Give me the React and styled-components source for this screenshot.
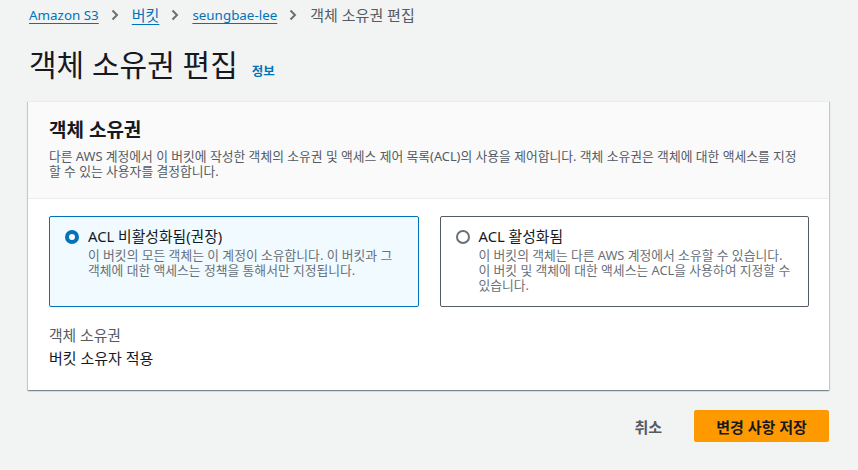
import styled, { createGlobalStyle } from 'styled-components';

const GlobalStyle = createGlobalStyle`
  html, body {
    margin: 0;
    padding: 0;
    background: #f2f3f3;
  }
  body {
    font-family: "Noto Sans", "Noto Sans CJK KR", sans-serif;
    color: #16191f;
  }
`;

const Page = styled.div`
  padding: 0 29px 0 28px;
`;

const Breadcrumbs = styled.nav`
  display: flex;
  align-items: center;
  height: 28px;
  padding-top: 1px;
  padding-left: 1px;
  font-size: 14px;
  line-height: 20px;
`;

const Crumb = styled.a`
  color: #0073bb;
  text-decoration: underline;
  text-underline-offset: 3px;
  text-decoration-thickness: 1px;
  font-size: ${(p) => (p.$ko ? '15px' : '13.4px')};
`;

const Current = styled.span`
  color: #545b64;
  font-size: 15px;
`;

const Sep = styled.svg`
  width: 8px;
  height: 12px;
  margin: 0 13px 0 12px;
  flex-shrink: 0;
`;

const Chevron = () => (
  <Sep viewBox="0 0 8 12">
    <path d="M1.5 1.5 L6 6 L1.5 10.5" fill="none" stroke="#687078" strokeWidth="2" />
  </Sep>
);

const TitleRow = styled.div`
  display: flex;
  align-items: baseline;
  padding: 18px 0 0 1px;
  height: 54px;
  box-sizing: border-box;
`;

const Title = styled.h1`
  margin: 0;
  font-size: 30px;
  line-height: 36px;
  font-weight: 400;
  color: #16191f;
`;

const InfoLink = styled.a`
  margin-left: 14px;
  font-size: 12.5px;
  font-weight: 700;
  color: #0073bb;
`;

const Card = styled.section`
  margin-top: 18px;
  background: #fff;
  border-top: 1px solid #eaeded;
  box-shadow: 0 1px 1px 0 rgba(0, 28, 36, 0.3), 1px 1px 1px 0 rgba(0, 28, 36, 0.15),
    -1px 1px 1px 0 rgba(0, 28, 36, 0.15);
`;

const CardHeader = styled.header`
  background: #fafafa;
  border-bottom: 1px solid #eaeded;
  padding: 16px 20px 19px 21px;
`;

const CardTitle = styled.h2`
  margin: 0 0 7px;
  font-size: 19px;
  line-height: 24px;
  font-weight: 700;
`;

const Description = styled.p`
  margin: 0;
  font-size: 12.8px;
  line-height: 15px;
  color: #545b64;
`;

const CardBody = styled.div`
  padding: 17px 20px 22px 21px;
`;

const Tiles = styled.div`
  display: grid;
  grid-template-columns: 1fr 1fr;
  gap: 21px;
`;

const Tile = styled.label`
  display: flex;
  align-items: flex-start;
  gap: 9px;
  padding: 11px 14px 13px 15px;
  border: 1px solid ${(p) => (p.$selected ? '#0073bb' : '#545b64')};
  border-radius: 2px;
  background: ${(p) => (p.$selected ? '#f1faff' : '#fff')};
`;

const Radio = styled.span`
  flex-shrink: 0;
  width: 14px;
  height: 14px;
  margin-top: 2px;
  box-sizing: border-box;
  border-radius: 50%;
  background: #fff;
  border: ${(p) => (p.$checked ? '4px solid #0073bb' : '2px solid #687078')};
`;

const TileText = styled.div`
  display: flex;
  flex-direction: column;
`;

const TileLabel = styled.span`
  font-size: 14.8px;
  line-height: 17px;
  color: #16191f;
`;

const TileDesc = styled.span`
  margin-top: 3px;
  font-size: 12.8px;
  line-height: 15px;
  color: #687078;
`;

const Field = styled.div`
  margin-top: 18px;
`;

const FieldLabel = styled.div`
  font-size: 14.8px;
  line-height: 20px;
  color: #545b64;
`;

const FieldValue = styled.div`
  margin-top: 3px;
  font-size: 15px;
  line-height: 20px;
  color: #16191f;
`;

const Actions = styled.div`
  display: flex;
  justify-content: flex-end;
  align-items: center;
  gap: 11px;
  margin-top: 20px;
`;

const Button = styled.button`
  height: 32px;
  padding: 0 20px;
  font-family: inherit;
  font-size: 15px;
  font-weight: 700;
  border-radius: 2px;
  border: 1px solid ${(p) => (p.$primary ? '#ff9900' : 'transparent')};
  background: ${(p) => (p.$primary ? '#ff9900' : 'transparent')};
  color: ${(p) => (p.$primary ? '#16191f' : '#545b64')};
  min-width: ${(p) => (p.$primary ? '135px' : 'auto')};
`;

const options = [
  {
    id: 'disabled',
    label: 'ACL 비활성화됨(권장)',
    desc: ['이 버킷의 모든 객체는 이 계정이 소유합니다. 이 버킷과 그', '객체에 대한 액세스는 정책을 통해서만 지정됩니다.'],
  },
  {
    id: 'enabled',
    label: 'ACL 활성화됨',
    desc: [
      '이 버킷의 객체는 다른 AWS 계정에서 소유할 수 있습니다.',
      '이 버킷 및 객체에 대한 액세스는 ACL을 사용하여 지정할 수',
      '있습니다.',
    ],
  },
];

export default function App() {
  const selected = 'disabled';

  return (
    <Page>
      <GlobalStyle />
      <Breadcrumbs>
        <Crumb>Amazon S3</Crumb>
        <Chevron />
        <Crumb $ko>버킷</Crumb>
        <Chevron />
        <Crumb>seungbae-lee</Crumb>
        <Chevron />
        <Current>객체 소유권 편집</Current>
      </Breadcrumbs>

      <TitleRow>
        <Title>객체 소유권 편집</Title>
        <InfoLink>정보</InfoLink>
      </TitleRow>

      <Card>
        <CardHeader>
          <CardTitle>객체 소유권</CardTitle>
          <Description>
            다른 AWS 계정에서 이 버킷에 작성한 객체의 소유권 및 액세스 제어 목록(ACL)의 사용을 제어합니다. 객체 소유권은 객체에 대한 액세스를 지정
            <br />
            할 수 있는 사용자를 결정합니다.
          </Description>
        </CardHeader>
        <CardBody>
          <Tiles>
            {options.map((o) => (
              <Tile key={o.id} $selected={o.id === selected}>
                <Radio $checked={o.id === selected} />
                <TileText>
                  <TileLabel>{o.label}</TileLabel>
                  <TileDesc>
                    {o.desc.map((line, i) => (
                      <span key={i}>
                        {line}
                        <br />
                      </span>
                    ))}
                  </TileDesc>
                </TileText>
              </Tile>
            ))}
          </Tiles>
          <Field>
            <FieldLabel>객체 소유권</FieldLabel>
            <FieldValue>버킷 소유자 적용</FieldValue>
          </Field>
        </CardBody>
      </Card>

      <Actions>
        <Button>취소</Button>
        <Button $primary>변경 사항 저장</Button>
      </Actions>
    </Page>
  );
}
